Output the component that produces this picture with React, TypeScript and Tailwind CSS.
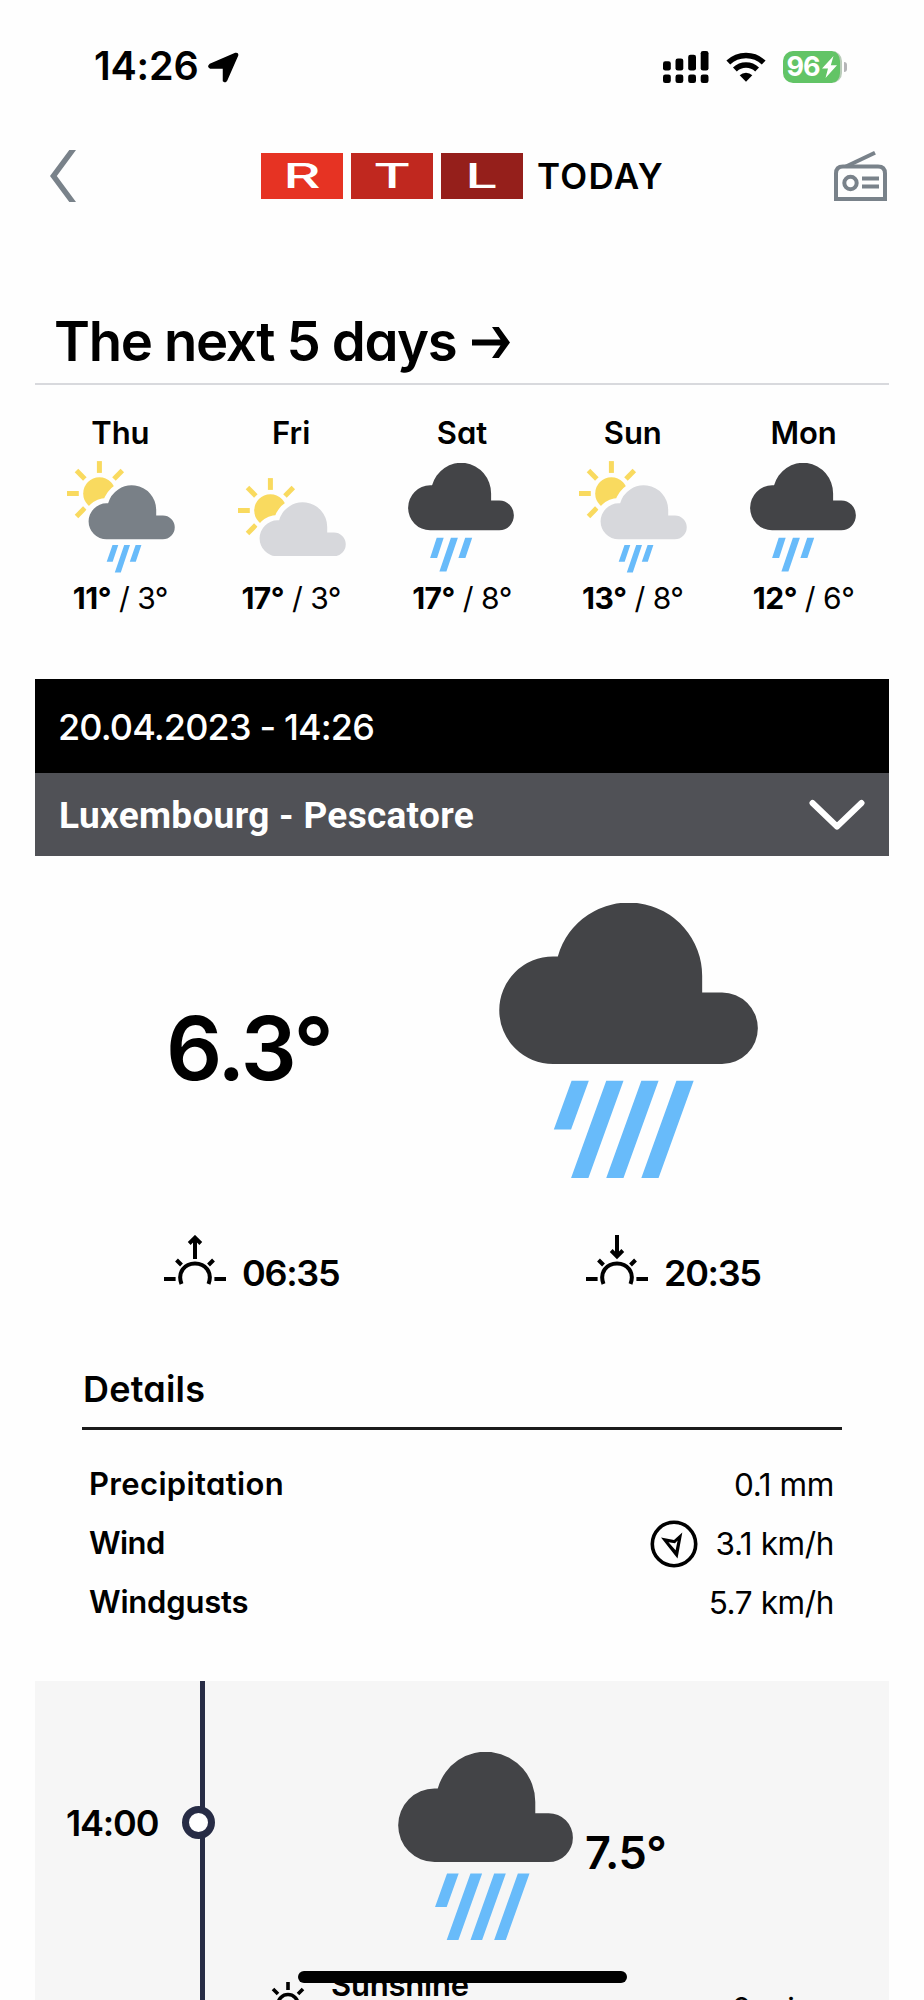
type Condition = "sun-cloud" | "sun-cloud-rain" | "sun-dark-cloud-rain" | "rain";

interface Day {
    name: string;
    condition: Condition;
    high: string;
    low: string;
}

const DAYS: Day[] = [
    { name: "Thu", condition: "sun-dark-cloud-rain", high: "11°", low: "3°" },
    { name: "Fri", condition: "sun-cloud", high: "17°", low: "3°" },
    { name: "Sat", condition: "rain", high: "17°", low: "8°" },
    { name: "Sun", condition: "sun-cloud-rain", high: "13°", low: "8°" },
    { name: "Mon", condition: "rain", high: "12°", low: "6°" },
];

const CLOUD =
    "M54 161A53.75 53.75 0 0 1 54 53.5H58.7A73.3 73.3 0 0 1 202.7 73V89.5H222.5A35.75 35.75 0 0 1 222.5 161Z";

// ── Weather icons ─────────────────────────────────────────────
function SunCloud({ cloud, rain }: { cloud: string; rain: boolean }) {
    return (
        <svg
            viewBox={rain ? "0 0 108 112" : "0 0 108 78"}
            className={rain ? "-mt-px ml-px h-[112px] w-[108px]" : "-mt-[2px] ml-px h-[78px] w-[108px]"}
        >
            <g fill="#f9da5f" transform="translate(32.4 32.5)">
                <circle r="16.2" />
                {[0, 45, -45, -90, -135].map((angle) => (
                    <rect
                        key={angle}
                        x="-2.5"
                        y="-32.4"
                        width="5"
                        height="11.8"
                        transform={`rotate(${angle})`}
                    />
                ))}
            </g>
            <path
                d={CLOUD}
                transform="translate(21.5 24.5) scale(0.334)"
                fill={cloud}
                stroke="#fefefe"
                strokeWidth="32"
                paintOrder="stroke"
            />
            {rain && (
                <path
                    fill="#68bbfa"
                    d="M45.5 84h5.8l-5.6 16.7h-6zM57.2 84h5.8l-9.2 27.4h-6zM68.6 84h5.8l-5.6 16.7h-6z"
                />
            )}
        </svg>
    );
}

function LightRain() {
    return (
        <svg viewBox="0 0 106 109" className="-ml-px h-[109px] w-[106px]">
            <path d={CLOUD} transform="scale(0.41 0.418)" fill="#434447" />
            <path
                fill="#68bbfa"
                d="M28.7 74.7h7l-6.6 20.4h-7zM42.9 74.7h7l-11.5 33.7h-7zM57.2 74.7h7l-6.8 20.4h-7z"
            />
        </svg>
    );
}

function HeavyRain({ className }: { className: string }) {
    return (
        <svg viewBox="0 0 258.4 275" preserveAspectRatio="none" className={className}>
            <path d={CLOUD} fill="#434447" />
            <path
                fill="#68bbfa"
                d="M72.4 177.7h17.2L71.9 226.6h-17.2zM107 177.7h17.2L89.2 275H71.9zM142 177.7h17.2L124.2 275H107zM177 177.7h17.2L159.2 275H142z"
            />
        </svg>
    );
}

function WeatherIcon({ condition }: { condition: Condition }) {
    if (condition === "rain") return <LightRain />;
    return (
        <SunCloud
            cloud={condition === "sun-dark-cloud-rain" ? "#798087" : "#d7d8dc"}
            rain={condition !== "sun-cloud"}
        />
    );
}

function SunHorizon({ setting = false }: { setting?: boolean }) {
    return (
        <svg viewBox="0 0 62 50" className="h-[50px] w-[62px]" fill="none" stroke="#000" strokeWidth="4">
            <path d="M17.500 49C13 37 21 28.500 31 28.500S49 37 44.500 49" />
            <path d="M0 44h11.600M50.400 44H62M12.500 25l5 5M49.500 25l-5 5" />
            {setting ? (
                <path d="M31 0v21M25.200 15.500l5.800 5.800 5.800-5.800" />
            ) : (
                <path d="M31 24V3M25.200 8.500L31 2.700l5.800 5.800" />
            )}
        </svg>
    );
}

// ── Phone status bar ──────────────────────────────────────────
function StatusBar() {
    return (
        <div className="flex h-[134px] items-center pl-[94px] pr-[77px]">
            <span className="w-[114px] whitespace-nowrap text-[39.500px] font-semibold tracking-[-0.2px]">
                14:26
            </span>
            <svg viewBox="0 0 31 31" className="h-[31px] w-[31px]">
                <path
                    d="M2 12.500L27.500 1.500Q30 1 29.500 3.500L18.500 28.500Q17.500 30.500 15.500 29V16H2.500Q-.5 14.500 2 12.500Z"
                    stroke="#000"
                    strokeWidth="1.500"
                    strokeLinejoin="round"
                />
            </svg>
            <div className="ml-auto flex items-center">
                <svg viewBox="0 0 46 32" className="h-8 w-[46px]">
                    <rect x="0" y="10.300" width="7.800" height="9.200" rx="2.300" />
                    <rect x="12.500" y="7.500" width="7.800" height="12" rx="2.300" />
                    <rect x="25.200" y="3.700" width="7.800" height="15.800" rx="2.300" />
                    <rect x="37.700" y="0" width="7.800" height="19.500" rx="2.300" />
                    {[0, 12.5, 25.2, 37.7].map((x) => (
                        <rect key={x} x={x} y="23.500" width="7.800" height="8.500" rx="2.300" />
                    ))}
                </svg>
                <svg viewBox="0 0 40 30" className="ml-[17px] h-[30px] w-10" fill="none" stroke="#000" strokeWidth="5.500">
                    <path d="M2.300 10.600A25.500 25.500 0 0 1 37.700 10.600" />
                    <path d="M8.900 17.600A16 16 0 0 1 31.100 17.600" />
                    <path d="M20 29.700L13.700 23.300A9 9 0 0 1 26.300 23.300Z" fill="#000" stroke="none" />
                </svg>
                <div className="ml-[17px] flex h-8 w-[59px] items-center justify-center gap-0.5 rounded-[10px] border-r-2 border-[#b9ccb9] bg-[#62c466] text-[27px] font-bold tracking-[-1px] text-white">
                    96
                    <svg viewBox="0 0 15 22" className="h-[22px] w-[15px]" fill="#fff">
                        <path d="M11.500 0L0 12.500h6L3.500 22 15 9.300H8.800z" />
                    </svg>
                </div>
                <div className="ml-[2px] h-[10px] w-[3px] rounded-r-full bg-[#b5b5b8]" />
            </div>
        </div>
    );
}

function LogoTile({ letter, className }: { letter: string; className: string }) {
    return (
        <div className={`flex h-[46px] w-[82px] items-center justify-center text-white ${className}`}>
            <span className="scale-x-[1.700] text-[34px] leading-none font-medium">{letter}</span>
        </div>
    );
}

function Header() {
    return (
        <header className="flex h-[84px] items-center pl-[50px] pr-[37px]">
            <svg viewBox="0 0 26 52" className="h-[52px] w-[26px]" fill="#79828a">
                <path d="M26 0h-6.700L0 26l19.300 26H26L6.800 26z" />
            </svg>
            <div className="ml-[185px] flex gap-2">
                <LogoTile letter="R" className="bg-[#e63323]" />
                <LogoTile letter="T" className="bg-[#c0281f]" />
                <LogoTile letter="L" className="bg-[#951f1b]" />
            </div>
            <span className="ml-[14px] whitespace-nowrap text-[35px] font-semibold tracking-[1.300px]">
                TODAY
            </span>
            <svg viewBox="0 0 53 50" className="ml-auto h-[50px] w-[53px]" fill="none" stroke="#79828a" strokeWidth="4">
                <path d="M2 48V22.500Q2 15.500 9 15.500H44Q51 15.500 51 22.500V48Z" />
                <path d="M12 15.500L41 1.800" />
                <circle cx="16.500" cy="32" r="6.200" />
                <path d="M28 27.500h17M28 35.500h17" />
            </svg>
        </header>
    );
}

// ── Five day forecast ─────────────────────────────────────────
function Forecast() {
    return (
        <section className="mx-[35px] pt-[83px]">
            <h2 className="flex h-[84px] items-center gap-[16px] border-b-2 border-[#d8d9dd] pl-[19px] text-[54.500px] font-semibold">
                <span className="whitespace-nowrap tracking-[-1.350px]">The next 5 days</span>
                <svg viewBox="0 0 38 31" className="h-[31px] w-[38px]" fill="#000">
                    <path d="M0 12.600H28.500L20 0H26.800L38 15.500 26.800 31H20L28.500 18.400H0Z" />
                </svg>
            </h2>
            <div className="grid grid-cols-5 pt-[28px]">
                {DAYS.map((day) => (
                    <div key={day.name} className="flex flex-col items-center">
                        <span className="h-10 text-[31px] leading-10 font-semibold">{day.name}</span>
                        <div className="mt-2 flex h-[113px] items-center">
                            <WeatherIcon condition={day.condition} />
                        </div>
                        <span className="mt-1 h-10 text-[30px] leading-10 tracking-[-0.5px] whitespace-nowrap">
                            <b className="font-bold">{day.high}</b> / {day.low}
                        </span>
                    </div>
                ))}
            </div>
        </section>
    );
}

// ── Current conditions ────────────────────────────────────────
function Current() {
    return (
        <section className="mx-[35px] mt-[61px]">
            <div className="flex h-[94px] items-center bg-black pl-[23px] pt-[2px] text-[36px] font-medium tracking-[-0.850px] text-white">
                20.04.2023 - 14:26
            </div>
            <button className="flex h-[83px] w-full items-center justify-between bg-[#505156] pl-[24px] pr-6 text-white">
                <span className="pt-[2px] font-[Roboto,sans-serif] text-[37px] font-bold tracking-[0.300px]">
                    Luxembourg - Pescatore
                </span>
                <svg viewBox="0 0 56 32" className="h-8 w-14" fill="none" stroke="#fff" strokeWidth="6" strokeLinecap="round" strokeLinejoin="round">
                    <path d="M3.500 4L28 27.500 52.500 4" />
                </svg>
            </button>
            <div className="flex h-[379px] items-start">
                <div className="w-[464px] pl-[131px] pt-[132px] text-[88px] leading-[120px] font-semibold tracking-[-2.400px]">
                    6.3°
                </div>
                <HeavyRain className="mt-[47px] h-[275px] w-[259px]" />
            </div>
            <div className="flex h-[50px] text-[36px] font-semibold tracking-[-1.300px]">
                <div className="flex w-[422px] pl-[129px]">
                    <SunHorizon />
                    <span className="ml-4 pt-[13px] leading-[50px]">06:35</span>
                </div>
                <div className="flex pl-[129px]">
                    <SunHorizon setting />
                    <span className="ml-4 pt-[13px] leading-[50px]">20:35</span>
                </div>
            </div>
        </section>
    );
}

function WindDirection() {
    return (
        <svg viewBox="-24 -24 48 48" className="mr-[18px] h-12 w-12">
            <circle r="21.700" fill="none" stroke="#000" strokeWidth="3.600" />
            <path
                fillRule="evenodd"
                d="M-13 -6.500L0 -4 8.300 -11.500 3.500 14.500ZM-5.500 -1.800L1.600 6.200 3.600 -3.500 1 -0.800Z"
            />
        </svg>
    );
}

const DETAILS = [
    { label: "Precipitation", value: "0.1 mm", tracking: "tracking-[0.350px]" },
    { label: "Wind", value: "3.1 km/h", tracking: "tracking-[-0.600px]", direction: true },
    { label: "Windgusts", value: "5.7 km/h", tracking: "tracking-[-0.200px]" },
];

function Details() {
    return (
        <section className="mx-[82px] mt-[75px]">
            <h3 className="h-[70px] border-b-[3px] border-[#1b1b1b] pl-[1px] text-[36px] leading-[58px] font-semibold tracking-[0.200px]">
                Details
            </h3>
            <dl className="pt-[25px] pl-[7px] pr-[8px] text-[31.500px]">
                {DETAILS.map((row) => (
                    <div key={row.label} className="flex h-[59px] items-center justify-between">
                        <dt className={`text-[31px] font-semibold ${row.tracking}`}>{row.label}</dt>
                        <dd className="flex items-center tracking-[-0.400px]">
                            {row.direction && <WindDirection />}
                            {row.value}
                        </dd>
                    </div>
                ))}
            </dl>
        </section>
    );
}

// ── Hourly timeline, runs on past the bottom edge ─────────────
function Timeline() {
    return (
        <section className="mx-[35px] mt-[49px] flex h-[319px] overflow-hidden bg-[#f6f6f6]">
            <div className="w-[165px] pl-[31px] pt-[112px] text-[36px] leading-[60px] font-semibold tracking-[-1.200px]">
                14:00
            </div>
            <div className="relative w-[5px] bg-[#272c45]">
                <div className="absolute top-[125px] -left-[18px] h-[33px] w-[33px] rounded-full border-[7px] border-[#272c45] bg-white" />
            </div>
            <div className="flex-1">
                <div className="flex h-[281px] pl-[193px] pt-[71px]">
                    <HeavyRain className="h-[188px] w-[175px]" />
                    <span className="ml-[12px] h-[60px] pt-[71px] text-[45px] leading-[60px] font-semibold tracking-[-0.400px]">
                        7.5°
                    </span>
                </div>
                <div className="flex pl-[66px] text-[31px] leading-[46px]">
                    <svg viewBox="0 0 34 52" className="mt-5 h-[52px] w-[34px]" fill="none" stroke="#000" strokeWidth="3.600">
                        <circle cx="17" cy="22.500" r="10" />
                        <path d="M17 0v8M2 7l5 5M32 7l-5 5" />
                    </svg>
                    <span className="ml-[26px] font-semibold tracking-[-0.200px]">Sunshine</span>
                    <span className="ml-auto pt-6 pr-[76px]">0 min</span>
                </div>
            </div>
        </section>
    );
}

export default function App() {
    return (
        <div className="relative h-[2000px] w-[924px] overflow-hidden bg-[#fefefe] font-[Inter,sans-serif] text-black [font-feature-settings:'cv11']">
            <StatusBar />
            <Header />
            <Forecast />
            <Current />
            <Details />
            <Timeline />
            {/* Home indicator */}
            <div className="absolute top-[1971px] left-[298px] h-3 w-[329px] rounded-full bg-black" />
        </div>
    );
}
